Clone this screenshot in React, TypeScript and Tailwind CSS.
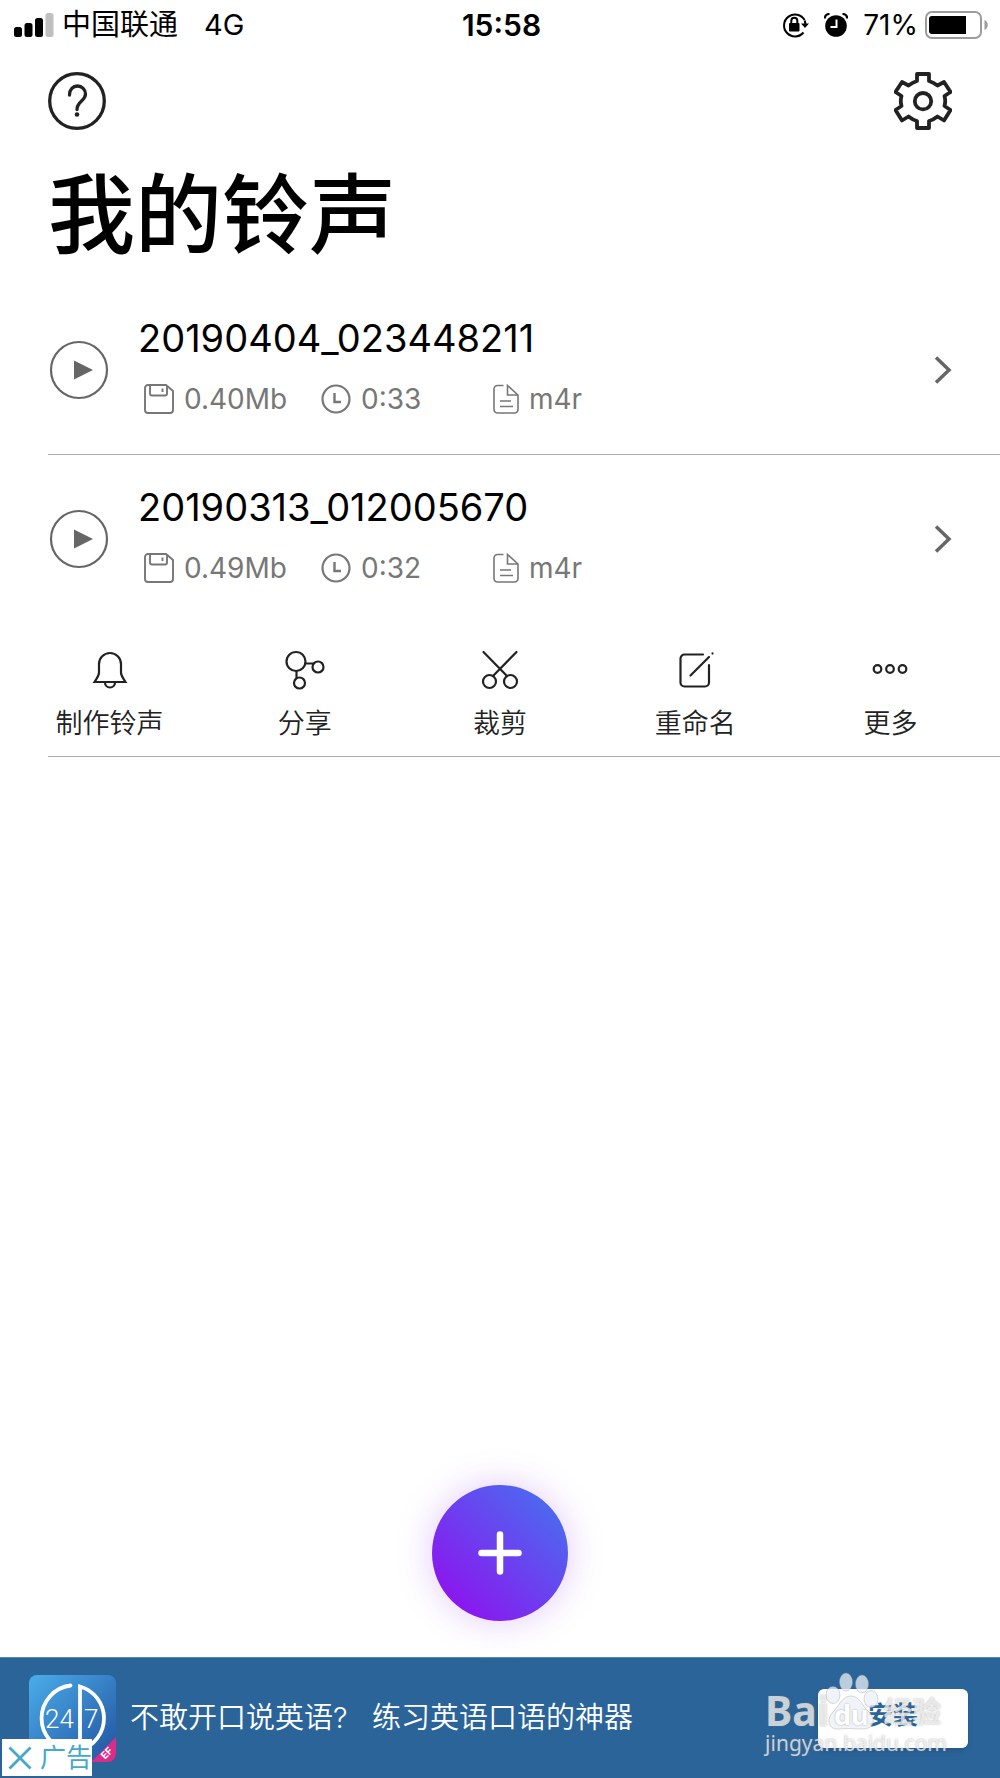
import type { ReactNode } from 'react';

interface Ringtone {
  name: string;
  size: string;
  duration: string;
  format: string;
}

interface Action {
  label: string;
  icon: ReactNode;
}

const ringtones: Ringtone[] = [
  { name: '20190404_023448211', size: '0.40Mb', duration: '0:33', format: 'm4r' },
  { name: '20190313_012005670', size: '0.49Mb', duration: '0:32', format: 'm4r' },
];

const actions: Action[] = [
  {
    label: '制作铃声',
    icon: (
      <>
        <path d="M4.500 32C7 28 9 26 9 22.500V14a11 11 0 0 1 22 0v8.500c0 3.500 2 5.500 4.500 9.500Z" />
        <path d="M15 32.500a5 5 0 0 0 10 0" />
      </>
    ),
  },
  {
    label: '分享',
    icon: (
      <>
        <circle cx="11" cy="11.500" r="9.500" />
        <circle cx="33" cy="17" r="5.500" />
        <circle cx="14.500" cy="33" r="5.500" />
        <path d="M20.500 13.500h7.500M11.500 21v7" />
      </>
    ),
  },
  {
    label: '裁剪',
    icon: (
      <>
        <path d="M3.500 2 27 26M36.500 2 13 26" />
        <circle cx="9.500" cy="31.500" r="6.500" />
        <circle cx="30.500" cy="31.500" r="6.500" />
      </>
    ),
  },
  {
    label: '重命名',
    icon: (
      <>
        <path d="M28 4.500H9.500a4 4 0 0 0-4 4v24a4 4 0 0 0 4 4H30a4 4 0 0 0 4-4V15" />
        <path d="M15.500 25.500 34 7M37.500 3.400v.2" />
      </>
    ),
  },
  {
    label: '更多',
    icon: (
      <>
        <circle cx="7.500" cy="19" r="3.800" />
        <circle cx="20" cy="19" r="3.800" />
        <circle cx="32.500" cy="19" r="3.800" />
      </>
    ),
  },
];

function StatusBar() {
  return (
    <div className="grid h-[50px] grid-cols-[1fr_auto_1fr] items-center pl-3.5 pr-[11px] text-[28px] leading-8 text-black">
      <div className="flex items-center">
        <svg className="h-6 w-10" viewBox="0 0 40 24">
          <rect x="0" y="14" width="8" height="10" rx="2.500" />
          <rect x="10.500" y="10" width="8" height="14" rx="2.500" />
          <rect x="21" y="5" width="8" height="19" rx="2.500" />
          <rect x="31.500" y="0" width="8" height="24" rx="2.500" fill="#bfbfbf" />
        </svg>
        <span className="ml-2 text-[29px]">中国联通</span>
        <span className="ml-[26px] text-[29px]">4G</span>
      </div>
      <div className="text-center text-[30px] font-semibold">15:58</div>
      <div className="flex items-center justify-end">
        {/* rotation lock */}
        <svg className="h-7 w-7" viewBox="0 0 28 28" fill="none" stroke="#000" strokeWidth="2">
          <path d="M23.600 9A11 11 0 1 0 22.500 21.500M23.800 9.500l.6 3.500" />
          <path d="M20 12.500h8l-4 4.500Z" fill="#000" stroke="none" />
          <rect x="8" y="12" width="10.500" height="8.500" rx="1" fill="#000" stroke="none" />
          <path d="M10.300 13V9.800a3 3 0 0 1 6 0V13" />
        </svg>
        {/* alarm clock */}
        <svg className="ml-[15px] h-6 w-6" viewBox="0 0 24 24">
          <circle cx="12" cy="13" r="10.800" />
          <path d="M.8 5.500C1 2.500 2.500 1 5.500 1M23.200 5.500C23 2.500 21.500 1 18.500 1" fill="none" stroke="#000" strokeWidth="2.200" />
          <path d="M12.500 6.500v7.500H6.500" fill="none" stroke="#fff" strokeWidth="2" />
        </svg>
        <span className="ml-[15px]">71%</span>
        <svg className="ml-[7px] h-7 w-16" viewBox="0 0 64 28">
          <rect x="1" y="1" width="55" height="26" rx="6" fill="none" stroke="#9c9c9c" strokeWidth="2" />
          <path d="M7 5h34v18H7a3 3 0 0 1-3-3V8a3 3 0 0 1 3-3Z" />
          <path d="M59.500 9a5.500 5.500 0 0 1 0 10Z" fill="#9c9c9c" />
        </svg>
      </div>
    </div>
  );
}

function PlayIcon() {
  return (
    <svg className="h-[60px] w-[60px]" viewBox="0 0 60 60" fill="none">
      <circle cx="30" cy="30" r="28" stroke="#666" strokeWidth="2.200" />
      <path d="M25 20.500v19L44 30Z" fill="#666" />
    </svg>
  );
}

function RingtoneRow({ tone }: { tone: Ringtone }) {
  return (
    <div className="flex h-[168px] items-center pl-px pr-12">
      <button type="button" aria-label="播放">
        <PlayIcon />
      </button>
      <div className="ml-[29px] flex-1 pb-2.5">
        <div className="text-[38px] leading-[48px] text-black">{tone.name}</div>
        <div className="mt-5 grid grid-cols-[177px_172px_1fr] pl-1.5 text-[28px] leading-[34px] text-[#777]">
          <span className="flex items-center gap-2.5">
            <svg className="h-[30px] w-[30px]" viewBox="0 0 30 30" fill="none" stroke="currentColor" strokeWidth="1.900">
              <path d="M22 1H4a3 3 0 0 0-3 3v22a3 3 0 0 0 3 3h22a3 3 0 0 0 3-3V7Z" />
              <path d="M6 1v8.500a2 2 0 0 0 2 2h13a2 2 0 0 0 2-2V2M18.500 4.500v3.500" />
            </svg>
            {tone.size}
          </span>
          <span className="flex items-center gap-2.5">
            <svg className="h-[30px] w-[30px]" viewBox="0 0 30 30" fill="none" stroke="currentColor" strokeWidth="2.200">
              <circle cx="15" cy="15" r="13.500" />
              <path d="M13.500 9v9H20" strokeWidth="2.400" />
            </svg>
            {tone.duration}
          </span>
          <span className="flex items-center gap-2.5">
            <svg className="h-[30px] w-[26px]" viewBox="0 0 26 30" fill="none" stroke="currentColor" strokeWidth="1.600">
              <path d="M10.500 1.500H4.500A3.500 3.500 0 0 0 1 5v20.500A3.500 3.500 0 0 0 4.500 29h17a3.500 3.500 0 0 0 3.500-3.500V11L14.500 1.500V11H25" />
              <path d="M7 17h11M7 22.500h13" />
            </svg>
            {tone.format}
          </span>
        </div>
      </div>
      <svg className="h-[30px] w-[18px]" viewBox="0 0 18 30" fill="none" stroke="#666" strokeWidth="3.500">
        <path d="M2 2.500 15 15 2 27.500" />
      </svg>
    </div>
  );
}

function ActionBar() {
  return (
    <div className="-ml-9 mr-3 grid h-[133px] grid-cols-5">
      {actions.map((action) => (
        <button key={action.label} type="button" className="flex flex-col items-center pt-[27px] text-[27px] leading-8 text-[#222]">
          <svg className="h-10 w-10 overflow-visible" viewBox="0 0 40 40" fill="none" stroke="currentColor" strokeWidth="2.200" strokeLinecap="round">
            {action.icon}
          </svg>
          <span className="mt-[18px] font-[350]">{action.label}</span>
        </button>
      ))}
    </div>
  );
}

function Watermark() {
  return (
    <div className="pointer-events-none absolute right-[53px] top-[15px] flex flex-col font-['Noto_Sans','Noto_Sans_CJK_SC',sans-serif] text-white/70 [text-shadow:0_0_2px_rgba(120,120,120,0.6)]">
      <div className="flex h-[60px] items-end">
        <span className="text-[41px] font-bold leading-[46px]">Bai</span>
        <span className="relative -ml-1.5 flex h-[62px] w-14 items-end justify-center">
          <svg className="absolute inset-0 h-full w-full" viewBox="0 0 56 62" fill="rgba(235,240,245,0.75)" stroke="rgba(150,150,150,0.35)">
            <ellipse cx="10" cy="24" rx="7" ry="8.500" />
            <ellipse cx="23" cy="11" rx="6.500" ry="9" />
            <ellipse cx="39" cy="13" rx="6.500" ry="9" />
            <ellipse cx="48" cy="28" rx="7" ry="8.500" />
            <path d="M28 25c9 0 11 10 18 16 8 8 4 17-6 17-8 0-16-1-24 0-11 1-13-10-6-17C16 35 19 25 28 25Z" />
          </svg>
          <span className="relative text-[27px] font-bold leading-9 text-white">du</span>
        </span>
        <span className="ml-1 text-[29px] font-bold leading-[42px]">经验</span>
      </div>
      <span className="-mt-1 text-[21px] leading-7">jingyan.baidu.com</span>
    </div>
  );
}

function AdBanner() {
  return (
    <div className="relative flex h-[121px] items-center border-t border-[#5b89b1] bg-[#2a6499] pl-[29px] pr-8">
      <svg className="h-[87px] w-[87px] rounded-lg" viewBox="0 0 87 87">
        <defs>
          <linearGradient id="ad-icon" x1="0" y1="0" x2="1" y2="1">
            <stop offset="0" stopColor="#4badea" />
            <stop offset="1" stopColor="#2152a0" />
          </linearGradient>
        </defs>
        <rect width="87" height="87" fill="url(#ad-icon)" />
        <g fill="none" stroke="#fff" strokeWidth="3.800" strokeLinecap="round">
          <path d="M41.500 10.500A33 33 0 0 0 41.500 76" />
          <path d="M51 11.500A33 33 0 0 1 51 75Z" />
        </g>
        <g fill="#fff" fontSize="26" fontWeight="300" fontFamily="Roboto, sans-serif">
          <text x="16" y="53">24</text>
          <text x="55" y="53">7</text>
        </g>
        <path d="M87 62v25H62Z" fill="#d92d8a" />
        <text x="74" y="84" fontSize="10" fontWeight="700" fill="#fff" fontFamily="Inter, sans-serif" transform="rotate(-45 76 82)">EF</text>
      </svg>
      <p className="ml-3.5 flex-1 whitespace-pre text-[29px] font-[350] leading-10 text-white">不敢开口说英语?   练习英语口语的神器</p>
      <button type="button" className="h-[59px] w-[150px] rounded-md bg-white pb-1 text-[25px] font-bold text-[#2a6499] shadow-md">
        安装
      </button>
      <button type="button" className="absolute bottom-0.5 left-0.5 flex h-[37px] w-[90px] items-center bg-white pl-1.5 text-[26px] leading-8 text-[#45a9c9]">
        <svg className="mr-2 h-6 w-6 shrink-0" viewBox="0 0 24 24" fill="none" stroke="currentColor" strokeWidth="2.800">
          <path d="M1.500 1.500 22.500 22.500M22.500 1.500 1.500 22.500" />
        </svg>
        <span className="whitespace-nowrap">广告</span>
      </button>
      <Watermark />
    </div>
  );
}

export default function App() {
  return (
    <div className="flex min-h-screen flex-col bg-white font-['Inter','Noto_Sans_CJK_SC',sans-serif]">
      <StatusBar />
      <header className="flex items-center justify-between px-12 pt-[22px]">
        <button type="button" aria-label="帮助">
          <svg className="h-[58px] w-[58px]" viewBox="0 0 58 58" fill="none" stroke="#222" strokeWidth="3.300" strokeLinecap="round">
            <circle cx="29" cy="29" r="27.300" />
            <path d="M21.500 23c0-5.500 3.500-9 8-9s8 3.500 8 8c0 7-8.500 7-8.500 15.500" />
            <circle cx="29" cy="42.500" r="2.300" fill="#222" stroke="none" />
          </svg>
        </button>
        <button type="button" aria-label="设置">
          <svg className="h-[58px] w-[58px]" viewBox="0 0 58 58" fill="none" stroke="#222" strokeWidth="3.800" strokeLinejoin="round">
            <path d="M23 2h12v7c3.500 1 6 2.500 8.500 4.500l6.500-3.500 6.500 10-6 4c1 3.500 1 6.500 0 10l6 4L50 48.500l-6.500-4c-2.500 2-5 3.500-8.500 4.500v7H23v-7c-3.500-1-6-2.500-8.500-4.500l-6.500 4L1.500 38l6-4c-1-3.500-1-6.500 0-10l-6-4L8 10l6.500 3.500C17 11.500 19.500 10 23 9Z" />
            <circle cx="29" cy="29.200" r="8.200" />
          </svg>
        </button>
      </header>
      <main className="flex flex-1 flex-col">
        <h1 className="h-[156px] pl-12 pt-[34px] text-[87px] font-medium leading-[104px] text-black">我的铃声</h1>
        <ul className="ml-12">
          <li className="border-b border-[#aaa]">
            <RingtoneRow tone={ringtones[0]} />
          </li>
          <li className="border-b border-[#aaa]">
            <RingtoneRow tone={ringtones[1]} />
            <ActionBar />
          </li>
        </ul>
        <div className="mt-auto flex justify-center pb-9">
          <button
            type="button"
            aria-label="添加"
            className="flex h-[136px] w-[136px] items-center justify-center rounded-full bg-linear-to-tr/srgb from-[#8a18ee] from-15% to-[#4a6cf0] to-90% shadow-[0_0_36px_rgba(150,60,240,0.28)]"
          >
            <svg className="h-11 w-11" viewBox="0 0 44 44" stroke="#fff" strokeWidth="6.500" strokeLinecap="round">
              <path d="M22 3.500v37M3.500 22h37" />
            </svg>
          </button>
        </div>
      </main>
      <AdBanner />
    </div>
  );
}
